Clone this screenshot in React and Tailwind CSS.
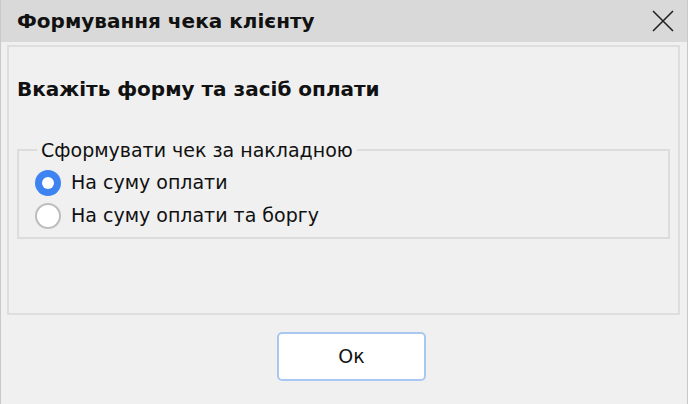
const font = { fontFamily: '"DejaVu Sans", "Liberation Sans", sans-serif' };

const Radio = ({ checked, label }) => (
  <div className="flex items-center h-[33px]">
    {checked ? (
      <span className="w-[26px] h-[26px] rounded-full bg-[#3d84f2] flex items-center justify-center shrink-0">
        <span className="w-[12px] h-[12px] rounded-full bg-white" />
      </span>
    ) : (
      <span className="w-[26px] h-[26px] rounded-full bg-white border-2 border-[#bdbdbd] shrink-0" />
    )}
    <span className="ml-[10px] text-[19px] text-[#111]">{label}</span>
  </div>
);

export default function App() {
  return (
    <div className="w-[688px] h-[404px] bg-[#f0f0f0] border-x border-[#c9c9c9] flex flex-col" style={font}>
      {/* Title bar */}
      <div className="h-[42px] bg-[#d9d9d9] flex items-center justify-between pl-[16px] pr-[13px] shrink-0">
        <span className="text-[20px] font-bold text-[#111]">Формування чека клієнту</span>
        <svg width="22" height="22" viewBox="0 0 22 22" className="text-[#222]">
          <path d="M1 1L21 21M21 1L1 21" stroke="currentColor" strokeWidth="1.6" />
        </svg>
      </div>

      {/* Content panel */}
      <div className="mt-[3px] ml-[6px] mr-[7px] h-[270px] border-2 border-[#dedede] px-[8px] shrink-0">
        <div className="mt-[30px] text-[20px] font-bold text-[#111] leading-[24px]">Вкажіть форму та засіб оплати</div>
        <fieldset className="mt-[38px] border-2 border-[#dcdcdc] pl-[18px] pb-[5px]">
          <legend className="ml-0 px-[4px] text-[19px] text-[#111] leading-[22px]">
            Сформувати чек за накладною
          </legend>
          <div className="-ml-[2px] mt-[5px]">
            <Radio checked label="На суму оплати" />
            <Radio label="На суму оплати та боргу" />
          </div>
        </fieldset>
      </div>

      {/* Footer */}
      <div className="flex-1 flex justify-center pt-[17px] pl-[15px]">
        <button className="w-[149px] h-[49px] bg-white border-2 border-[#a8c8f2] rounded-[5px] text-[19px] text-[#111]">
          Ок
        </button>
      </div>
    </div>
  );
}
